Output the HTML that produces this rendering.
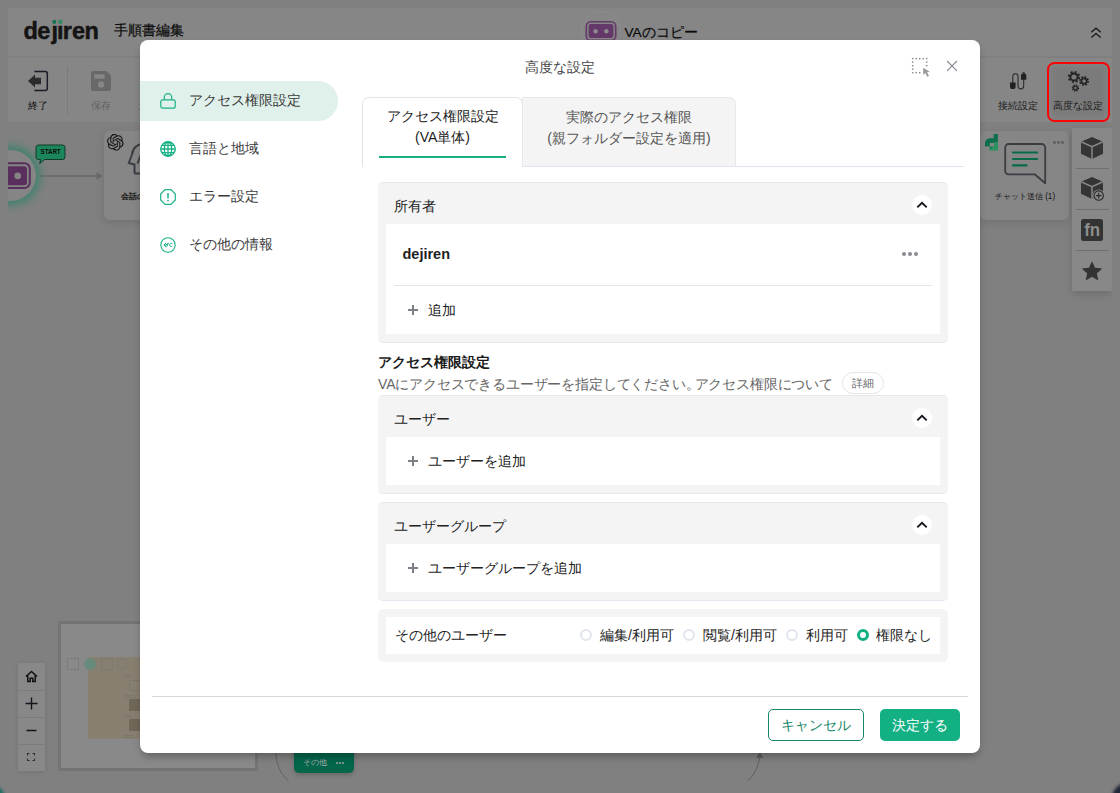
<!DOCTYPE html>
<html lang="ja"><head><meta charset="utf-8">
<style>
*{box-sizing:border-box;margin:0;padding:0}
html,body{width:1120px;height:793px;overflow:hidden;background:#808080;font-family:"Liberation Sans",sans-serif;color:#333}
.abs{position:absolute}
#bg{position:absolute;left:0;top:0;width:1120px;height:793px;overflow:hidden}
#hdr{left:8px;top:8px;width:1104px;height:48px;background:#868686}
#tb{left:8px;top:57px;width:1104px;height:65px;background:linear-gradient(#808080 0,#808080 1px,#868686 1px)}
.lbl{position:absolute;font-size:9.700px;margin-top:-.5px;color:#1a1a1a;white-space:nowrap;transform:translateX(-50%)}
.card{position:absolute;background:#868686;border-radius:6px;box-shadow:0 3px 8px rgba(0,0,0,.12)}
#modal{left:140px;top:40px;width:840px;height:713px;background:#fff;border-radius:8px;box-shadow:0 5px 9px -2px rgba(0,0,0,.3)}
.nav{position:absolute;left:0;width:198px;height:40px;font-size:13.7px;color:#3a3a3a;line-height:39px;padding-left:49px;white-space:nowrap}
.nav svg{position:absolute;left:20px;top:12px}
.nav.on{background:#e0f1eb;border-radius:0 20px 20px 0}
.sec{position:absolute;left:238px;width:570px;background:#f4f4f4;border-radius:5px;border-top:1px solid #e4e9f0;border-bottom:1px solid #e4e9f0}
.sec .h{position:absolute;left:16px;top:0;height:42px;line-height:46px;font-size:14px;color:#222}
.sec .w{position:absolute;left:8px;right:8px;background:#fff}
.chev{position:absolute;right:16px;top:12px;width:20px;height:20px;border-radius:50%;background:#fff}
.add{position:absolute;left:42px;font-size:14px;color:#222;white-space:nowrap}
.plus{position:absolute;left:22px;width:10px;height:10px}
.plus:before{content:"";position:absolute;left:0;top:4.200px;width:10px;height:1.600px;background:#7d8086}
.plus:after{content:"";position:absolute;left:4.200px;top:0;width:1.600px;height:10px;background:#7d8086}
.rd{position:absolute;top:12px;width:12px;height:12px;border-radius:50%;border:2px solid #e1e5ef;background:#fff}
.rl{position:absolute;top:0;line-height:36px;font-size:14px;color:#222;white-space:nowrap}
</style></head><body>
<div id="bg">
  <div id="hdr" class="abs">
    <svg class="abs" style="left:14px;top:9px" width="80" height="30" viewBox="0 0 80 30"><text x="1.400 15.200 29.500 34.900 40.700 49.900 62.400" y="21.500" font-family="Liberation Sans" font-weight="bold" font-size="23.500" fill="#141414" stroke="#141414" stroke-width=".500">dejiren</text><rect x="27.500" y="1.500" width="13.500" height="6.200" fill="#868686"/><circle cx="32.300" cy="4.900" r="2.050" fill="#15734e"/><rect x="36.400" y="2.900" width="3.800" height="3.900" fill="#2f8a63"/></svg>
    <div class="abs" style="left:105.800px;top:13px;font-size:13.600px;color:#0a0a0a;-webkit-text-stroke:.2px #0a0a0a;white-space:nowrap;line-height:20px">手順書編集</div>
    <div class="abs" style="left:573px;top:3px;width:40px;height:40px;border-radius:50%;border:1px solid #8d8d93;background:#868686"></div>
    <svg class="abs" style="left:577px;top:12px" width="32" height="22" viewBox="0 0 32 22"><rect x="1.300" y="1.800" width="29.400" height="18.600" rx="4.500" fill="none" stroke="#643868" stroke-width="1.600"/><rect x="3.600" y="4.100" width="24.800" height="14" rx="2.400" fill="#643868"/><circle cx="10.600" cy="11.200" r="2.200" fill="#8f8a90"/><circle cx="21.400" cy="11.200" r="2.200" fill="#8f8a90"/></svg>
    <div class="abs" style="left:616.500px;top:15px;font-size:13.600px;color:#0a0a0a;-webkit-text-stroke:.2px #0a0a0a;white-space:nowrap;line-height:20px">VAのコピー</div>
    <svg class="abs" style="left:1082px;top:19px" width="12" height="12" viewBox="0 0 12 12" fill="none" stroke="#16181f" stroke-width="1.3"><path d="M1.3 5.2 6 1.2 10.7 5.2M1.3 10.6 6 6.6 10.7 10.6"/></svg>
  </div>
  <div id="tb" class="abs">
    <svg class="abs" style="left:19px;top:13px" width="22" height="22" viewBox="0 0 22 22"><path d="M7.400 1.500H18.300a2 2 0 0 1 2 2V18.500a2 2 0 0 1-2 2H7.400" fill="none" stroke="#1b1b27" stroke-width="1.5"/><path d="M1 11 8 4.4V7.7H14V14.3H8V17.6Z" fill="#2b2b2b"/></svg>
    <div class="lbl" style="left:30px;top:42px;line-height:13px;color:#0c0c0c">終了</div>
    <div class="abs" style="left:59px;top:9px;width:1px;height:48px;background:#7b7b7b"></div>
    <svg class="abs" style="left:83px;top:14px" width="20" height="20" viewBox="0 0 20 20"><path d="M2 0H15.5L20 4.5V18a2 2 0 0 1-2 2H2a2 2 0 0 1-2-2V2a2 2 0 0 1 2-2Z" fill="#686868"/><rect x="3.300" y="3.200" width="10.2" height="4.6" fill="#868686"/><circle cx="10" cy="13.4" r="3.2" fill="#868686"/></svg>
    <div class="lbl" style="left:93px;top:42px;line-height:13px;color:#626262">保存</div>
    <div class="lbl" style="left:135px;top:42px;line-height:13px;color:#626262">元</div>
    <svg class="abs" style="left:999px;top:12px" width="22" height="22" viewBox="0 0 22 22" fill="none"><path d="M5.800 14V7.300a2.600 2.600 0 0 1 5.200 0V17a2.850 2.850 0 0 0 5.700 0V10.500" stroke="#2b2b2b" stroke-width="1.100"/><path d="M3 13.500H8.600V18.200L7.600 20H4L3 18.200Z M14 10.800H19.300V6.200L18.300 4.400H15L14 6.200Z" fill="#222"/><path d="M16.650 4.600V3.300" stroke="#222" stroke-width="2"/></svg>
    <div class="lbl" style="left:1010px;top:42px;line-height:13px">接続設定</div>
    <div class="abs" style="left:1039.400px;top:5.300px;width:62.200px;height:59.600px;border:2.500px solid #fa0505;border-radius:7.500px;background:#7b7b7b;box-shadow:inset 0 0 6px 2px #858585"></div>
    <svg class="abs" style="left:1058.600px;top:12.600px" width="24" height="24" viewBox="0 0 24 24"><g fill="none" stroke="#242424"><circle cx="7" cy="7" r="3.6" stroke-width="2"/><circle cx="7" cy="7" r="5.2" stroke-width="1.9" stroke-dasharray="2 2.08"/><circle cx="17" cy="11" r="2.7" stroke-width="1.7"/><circle cx="17" cy="11" r="4.1" stroke-width="1.7" stroke-dasharray="1.7 1.52"/><circle cx="8.4" cy="18" r="1.9" stroke-width="1.4"/><circle cx="8.4" cy="18" r="3" stroke-width="1.4" stroke-dasharray="1.3 1.06"/></g></svg>
    <div class="lbl" style="left:1070px;top:42px;line-height:13px">高度な設定</div>
  </div>
  <div id="cv" class="abs" style="left:8px;top:122px;width:1104px;height:671px;overflow:hidden">
    <!-- start node -->
    <div class="abs" style="left:-23.200px;top:28px;width:51px;height:51px;border-radius:50%;background:#858585;box-shadow:0 0 9px 4.500px #42826f;filter:blur(.4px)"></div>
    <svg class="abs" style="left:-20px;top:39px" width="44" height="30" viewBox="0 0 44 30"><rect x="2.800" y="2.200" width="39" height="24.800" rx="5.500" fill="none" stroke="#5a2f5e" stroke-width="2"/><rect x="5.600" y="5.300" width="33.400" height="18.900" rx="3" fill="#5a2f5e"/><circle cx="14.900" cy="14.900" r="3.300" fill="#858585"/><circle cx="29.700" cy="14.900" r="3.300" fill="#858585"/></svg>
    <svg class="abs" style="left:27.400px;top:21.900px" width="32" height="22" viewBox="0 0 32 22"><path d="M3.5 1H27.5a2.5 2.5 0 0 1 2.5 2.5V13a2.500 2.500 0 0 1-2.5 2.500H9.500L4.700 19.600 5.600 15.500H3.500a2.500 2.500 0 0 1-2.500-2.500V3.500A2.500 2.500 0 0 1 3.500 1Z" fill="#1b865b" stroke="#0e3a29" stroke-width="1"/><text x="15.600" y="10.400" font-family="Liberation Sans" font-weight="bold" font-size="7" fill="#0a0a0a" text-anchor="middle" textLength="20" lengthAdjust="spacingAndGlyphs">START</text></svg>
    <svg class="abs" style="left:30px;top:48px" width="66" height="12" viewBox="0 0 66 12"><path d="M2 6H60" stroke="#696969" stroke-width="1.500"/><path d="M58.500 2 64.500 6 58.500 10Z" fill="#696969"/></svg>
    <!-- left node card -->
    <div class="card" style="left:96px;top:9px;width:90px;height:89px"></div>
    <svg class="abs" style="left:99px;top:12.400px" width="16.600" height="16.600" viewBox="0 0 24 24"><path fill="#131313" d="M22.2819 9.8211a5.9847 5.9847 0 0 0-.5157-4.9108 6.0462 6.0462 0 0 0-6.5098-2.9A6.0651 6.0651 0 0 0 4.9807 4.1818a5.9847 5.9847 0 0 0-3.9977 2.9 6.0462 6.0462 0 0 0 .7427 7.0966 5.98 5.98 0 0 0 .511 4.9107 6.051 6.051 0 0 0 6.5146 2.9001A5.9847 5.9847 0 0 0 13.2599 24a6.0557 6.0557 0 0 0 5.7718-4.2058 5.9894 5.9894 0 0 0 3.9977-2.9001 6.0557 6.0557 0 0 0-.7475-7.0729zm-9.022 12.6081a4.4755 4.4755 0 0 1-2.8764-1.0408l.1419-.0804 4.7783-2.7582a.7948.7948 0 0 0 .3927-.6813v-6.7369l2.02 1.1686a.071.071 0 0 1 .038.052v5.5826a4.504 4.504 0 0 1-4.4945 4.4944zm-9.6607-4.1254a4.4708 4.4708 0 0 1-.5346-3.0137l.142.0852 4.783 2.7582a.7712.7712 0 0 0 .7806 0l5.8428-3.3685v2.3324a.0804.0804 0 0 1-.0332.0615L9.74 19.9502a4.4992 4.4992 0 0 1-6.1408-1.6464zM2.3408 7.8956a4.485 4.485 0 0 1 2.3655-1.9728V11.6a.7664.7664 0 0 0 .3879.6765l5.8144 3.3543-2.0201 1.1685a.0757.0757 0 0 1-.071 0l-4.8303-2.7865A4.504 4.504 0 0 1 2.3408 7.872zm16.5963 3.8558L13.1038 8.364 15.1192 7.2a.0757.0757 0 0 1 .071 0l4.8303 2.7913a4.4944 4.4944 0 0 1-.6765 8.1042v-5.6772a.79.79 0 0 0-.407-.667zm2.0107-3.0231l-.142-.0852-4.7735-2.7818a.7759.7759 0 0 0-.7854 0L9.409 9.2297V6.8974a.0662.0662 0 0 1 .0284-.0615l4.8303-2.7866a4.4992 4.4992 0 0 1 6.6802 4.66zM8.3065 12.863l-2.02-1.1638a.0804.0804 0 0 1-.038-.0567V6.0742a4.4992 4.4992 0 0 1 7.3757-3.4537l-.142.0805L8.704 5.459a.7948.7948 0 0 0-.3927.6813zm1.0976-2.3654l2.602-1.4998 2.6069 1.4998v2.9994l-2.5974 1.4997-2.6067-1.4997Z"/></svg>
    <svg class="abs" style="left:118px;top:20px" width="40" height="34" viewBox="0 0 40 34" fill="none" stroke="#3a3d42" stroke-width="2"><path d="M8.500 31.500V22.500L2.800 21 6 12.500C7 5.500 12 1.800 19 1.800"/><path d="M8.500 31.500H22"/><path d="M11.500 21.500 15 12.500"/></svg>
    <div class="abs" style="left:113px;top:68px;font-size:8.400px;font-weight:bold;color:#1a1a1a;white-space:nowrap;line-height:12px">会話の生成</div>
    <!-- right chat card -->
    <div class="card" style="left:972px;top:9px;width:89px;height:89px"></div>
    <svg class="abs" style="left:977px;top:12px" width="14" height="18" viewBox="0 0 14 18"><path d="M12.900 0H8.600V4.200H5A5 5 0 0 0 0 9.200V12.600H4.800V9H9V8.600H12.900Z" fill="#0f6e4b"/><rect x="9" y="8.600" width="3.900" height="8" fill="#2a9461"/><path d="M4.600 12.600H8.700V16.600H4.600Z" fill="#2a9461"/><path d="M4.600 12.600H8.700L4.600 16Z" fill="#1b7f55"/></svg>
    <svg class="abs" style="left:994px;top:19px" width="46" height="46" viewBox="0 0 46 46" fill="none"><path d="M6.700 3H39.700a3.500 3.500 0 0 1 3.500 3.500V42.300L32.700 33.300H6.700a3.500 3.500 0 0 1-3.500-3.500V6.500A3.500 3.500 0 0 1 6.700 3Z" stroke="#3b3d43" stroke-width="1.800" stroke-linejoin="round"/><path d="M11 11.500H35.200M11 18H35.200M11 24.400H24.600" stroke="#086a4a" stroke-width="2.100" stroke-linecap="round"/></svg>
    <div class="abs" style="left:1042px;top:18px;width:16px;height:6px"><i class="abs" style="left:3.200px;top:1px;width:2.800px;height:2.800px;border-radius:50%;background:#5f5f5f"></i><i class="abs" style="left:7.100px;top:1px;width:2.800px;height:2.800px;border-radius:50%;background:#5f5f5f"></i><i class="abs" style="left:11px;top:1px;width:2.800px;height:2.800px;border-radius:50%;background:#5f5f5f"></i></div>
    <div class="abs" style="left:972px;top:68px;width:90px;text-align:center;font-size:8.200px;color:#151515;white-space:nowrap;line-height:12px;top:69px">チャット送信 (1)</div>
    <!-- right side panel -->
    <div class="abs" style="left:1064px;top:6px;width:40px;height:163px;background:#888;box-shadow:0 3px 8px rgba(0,0,0,.14)">
      <i class="abs" style="left:4px;top:40px;width:33px;height:1.300px;background:#6f6f6f"></i>
      <i class="abs" style="left:4px;top:81px;width:33px;height:1.300px;background:#6f6f6f"></i>
      <i class="abs" style="left:4px;top:122px;width:33px;height:1.300px;background:#6f6f6f"></i>
      <svg class="abs" style="left:8px;top:8px" width="24" height="24" viewBox="0 0 24 24"><path d="M12 1 23 5.800V17.800L12 23 1 17.800V5.800Z" fill="#353535"/><path d="M1 5.800 12 10.800 23 5.800M12 10.800V23" stroke="#878787" stroke-width="1.500" fill="none"/></svg>
      <svg class="abs" style="left:8px;top:48px" width="28" height="28" viewBox="0 0 28 28"><path d="M12 1 23 5.800V17.800L12 23 1 17.800V5.800Z" fill="#353535"/><path d="M1 5.800 12 10.800 23 5.800M12 10.800V23" stroke="#878787" stroke-width="1.500" fill="none"/><circle cx="18.700" cy="19.600" r="6" fill="#888"/><circle cx="18.700" cy="19.600" r="4.700" fill="none" stroke="#2a2a2a" stroke-width="1.100"/><path d="M15.900 19.600H21.500M18.700 16.800V22.400" stroke="#2a2a2a" stroke-width="1.100"/></svg>
      <svg class="abs" style="left:9px;top:91px" width="22" height="22" viewBox="0 0 22 22"><rect width="22" height="22" rx="2.500" fill="#333"/><text x="11.200" y="17.300" font-family="Liberation Sans" font-weight="bold" font-size="18.500" fill="#8d8d8d" text-anchor="middle" textLength="16" lengthAdjust="spacingAndGlyphs">fn</text></svg>
      <svg class="abs" style="left:9px;top:132px" width="22" height="22" viewBox="0 0 22 22"><path d="M11 1.200 14 7.800 21.200 8.600 15.800 13.400 17.400 20.500 11 16.800 4.600 20.500 6.200 13.400 0.800 8.600 8 7.800Z" fill="#333"/></svg>
    </div>
    <!-- zoom controls -->
    <div class="abs" style="left:10px;top:541px;width:27px;height:108px;background:#888;box-shadow:0 1px 4px rgba(0,0,0,.12)">
      <i class="abs" style="left:0;top:27px;width:27px;height:1px;background:#7c7c7c"></i>
      <i class="abs" style="left:0;top:54px;width:27px;height:1px;background:#7c7c7c"></i>
      <i class="abs" style="left:0;top:81px;width:27px;height:1px;background:#7c7c7c"></i>
      <svg class="abs" style="left:7px;top:7px" width="13" height="13" viewBox="0 0 13 13" fill="none" stroke="#111" stroke-width="1.500"><path d="M1 6.500 6.500 1.500 12 6.500M2.800 5.500V11.500H5.200V8.300H7.800V11.500H10.200V5.500"/></svg>
      <svg class="abs" style="left:7px;top:34px" width="13" height="13" viewBox="0 0 13 13" stroke="#14141c" stroke-width="1.400"><path d="M0.500 6.500H12.500M6.500 0.500V12.500"/></svg>
      <svg class="abs" style="left:7px;top:61px" width="13" height="13" viewBox="0 0 13 13" stroke="#14141c" stroke-width="1.500"><path d="M1.500 6.500H11.500"/></svg>
      <svg class="abs" style="left:9.100px;top:90.200px" width="8" height="8" viewBox="0 0 9 9" fill="none" stroke="#2c2c34" stroke-width="1.200"><path d="M0.500 2.800V0.500H2.800M6.200 0.500H8.500V2.800M8.500 6.200V8.500H6.200M2.800 8.500H0.500V6.200"/></svg>
    </div>
    <!-- minimap -->
    <div class="abs" style="left:50px;top:499px;width:200px;height:150px;background:#898989;border:3px solid #747474;overflow:hidden">
      <div class="abs" style="left:27px;top:33px;width:120px;height:82px;background:#877f70"></div>
      <i class="abs" style="left:6px;top:34px;width:12px;height:12px;border:1px solid #7b7d7b"></i>
      <i class="abs" style="left:23px;top:34px;width:12px;height:12px;border-radius:50%;background:#688a7a"></i>
      <i class="abs" style="left:40px;top:34px;width:12px;height:12px;border:1px solid #7b7b72"></i>
      <i class="abs" style="left:57px;top:35px;width:9px;height:10px;border:1px solid #7b7b72"></i>
      <i class="abs" style="left:63px;top:51px;width:8px;height:3px;border:1px solid #7c776b;border-radius:2px"></i>
      <i class="abs" style="left:68px;top:56px;width:14px;height:11px;border:1px solid #7c776b;border-radius:1px"></i>
      <i class="abs" style="left:63px;top:71px;width:12px;height:3px;border:1px solid #7c776b;border-radius:2px"></i>
      <i class="abs" style="left:68px;top:75px;width:14px;height:12px;background:#6f6859"></i>
      <i class="abs" style="left:63px;top:91px;width:8px;height:3px;border:1px solid #7c776b;border-radius:2px"></i>
      <i class="abs" style="left:68px;top:95px;width:14px;height:12px;background:#6f6859"></i>
      <i class="abs" style="left:63px;top:111px;width:9px;height:3px;border:1px solid #7c776b"></i>
    </div>
    <!-- bottom -->
    <svg class="abs" style="left:260px;top:625px" width="30" height="40" viewBox="0 0 30 40" fill="none" stroke="#626262" stroke-width="1"><path d="M8 0C7 12 10 25 20.500 34"/></svg>
    <div class="abs" style="left:286px;top:622px;width:60px;height:29px;border-radius:5px;background:#03654a;box-shadow:0 2px 5px rgba(0,0,0,.2)"><span class="abs" style="left:9px;top:12px;font-size:8.400px;color:#a3aeaa;line-height:12px;white-space:nowrap">その他</span><i class="abs" style="left:42px;top:17.500px;width:2px;height:2px;border-radius:50%;background:#9aa8a3"></i><i class="abs" style="left:45px;top:17.500px;width:2px;height:2px;border-radius:50%;background:#9aa8a3"></i><i class="abs" style="left:48px;top:17.500px;width:2px;height:2px;border-radius:50%;background:#9aa8a3"></i></div>
    <svg class="abs" style="left:730px;top:625px" width="30" height="40" viewBox="0 0 30 40" fill="none" stroke="#5e5e5e" stroke-width="1"><path d="M10.300 33.500C17 27 21.300 18 21.800 7"/><path d="M19 10.500 21.800 5 24.600 10.500Z" fill="#5e5e5e"/></svg>
    <!-- corners -->
  </div>
  <div class="abs" style="left:-34px;top:782px;width:40px;height:40px;border-radius:50%;background:#1f6f60;filter:blur(1.5px)"></div>
  <div class="abs" style="left:1112px;top:783px;width:30px;height:30px;border-radius:50%;background:#232838;filter:blur(1.5px)"></div>
</div>
<div id="modal" class="abs">
  <div class="abs" style="left:0;top:16px;width:840px;text-align:center;font-size:14px;color:#444;line-height:22px">高度な設定</div>
  <svg class="abs" style="left:771px;top:17px" width="21" height="21" viewBox="0 0 21 21"><g fill="#8f8f8f"><rect x="0.95" y="0.85" width="1.5" height="1.5"/><rect x="0.95" y="4.35" width="1.5" height="1.5"/><rect x="0.95" y="7.95" width="1.5" height="1.5"/><rect x="0.95" y="11.45" width="1.5" height="1.5"/><rect x="0.95" y="14.95" width="1.5" height="1.5"/><rect x="4.45" y="0.85" width="1.5" height="1.5"/><rect x="4.45" y="14.95" width="1.5" height="1.5"/><rect x="7.95" y="0.85" width="1.5" height="1.5"/><rect x="7.95" y="14.95" width="1.5" height="1.5"/><rect x="11.45" y="0.85" width="1.5" height="1.5"/><rect x="14.95" y="0.85" width="1.5" height="1.5"/><rect x="14.95" y="4.35" width="1.5" height="1.5"/><rect x="14.95" y="7.95" width="1.5" height="1.5"/></g><path d="M12.200 10.700V18L14.300 16.100 16.300 19.800 18 19 16.100 15.300 18.800 14.800Z" fill="#9a9a9a"/></svg>
  <svg class="abs" style="left:806px;top:20px" width="12" height="12" viewBox="0 0 12 12" stroke="#8a8a95" stroke-width="1.150"><path d="M1.100 1 10.900 10.800M10.900 1 1.100 10.800"/></svg>
  <!-- nav -->
  <div class="nav on" style="top:41px"><svg width="16" height="16" viewBox="0 0 16 16" fill="none" stroke="#1ab188" stroke-width="1.200"><rect x="0.800" y="6.800" width="14.400" height="8.400" rx="2"/><path d="M4.300 6.800V4.300a3.700 3.700 0 0 1 7.400 0V6.800"/></svg>アクセス権限設定</div>
  <div class="nav" style="top:89px"><svg width="16" height="16" viewBox="0 0 16 16" fill="none" stroke="#1ab188" stroke-width="1.3"><circle cx="8" cy="8" r="7.200" stroke-width="1.400"/><ellipse cx="8" cy="8" rx="3.700" ry="7.200"/><path d="M8 0.800V15.200M0.800 8H15.200M2 4.300H14M2 11.700H14"/><path d="M4.500 1.800H11.500M4.500 14.200H11.500" stroke-width="1"/></svg>言語と地域</div>
  <div class="nav" style="top:137px"><svg width="16" height="16" viewBox="0 0 16 16" fill="none" stroke="#1ab188" stroke-width="1.200"><path d="M5 0.700H11L15.300 5V11L11 15.300H5L0.700 11V5Z"/><path d="M8 4V9.300M8 10.800V12.300" stroke-width="1.500"/></svg>エラー設定</div>
  <div class="nav" style="top:185px"><svg width="16" height="16" viewBox="0 0 16 16" fill="none" stroke="#1ab188" stroke-width="1.100"><circle cx="8" cy="8" r="7.200"/><path d="M6.300 6 3.900 8 6.300 10M4.800 8.500 8.800 6.200M8.300 6.200 6.600 9.800M12.300 6.700C11 6 9.600 6.800 9.600 8S11 10 12.300 9.300" stroke-width="1"/></svg>その他の情報</div>
  <!-- tabs -->
  <div class="abs" style="left:222px;top:126px;width:602px;height:1px;background:#dfe5ee"></div>
  <div class="abs" style="left:222px;top:57px;width:161px;height:70px;background:#fff;border:1px solid #e1e4ea;border-bottom:none;border-radius:7px 7px 0 0;text-align:center;font-size:14px;color:#222;line-height:21px;padding-top:8px">アクセス権限設定<br>(VA単体)</div>
  <div class="abs" style="left:239px;top:116px;width:127px;height:2px;background:#18b083"></div>
  <div class="abs" style="left:382px;top:57px;width:214px;height:70px;background:#f4f4f4;border:1px solid #e6e8ec;border-bottom:1px solid #dfe5ee;border-radius:0 7px 0 0;text-align:center;font-size:14px;color:#555;line-height:21px;padding-top:9px">実際のアクセス権限<br>(親フォルダー設定を適用)</div>
  <!-- owner -->
  <div class="sec" style="top:142px;height:161px"><div class="h">所有者</div><div class="chev"><svg width="20" height="20" viewBox="0 0 20 20" fill="none" stroke="#10131c" stroke-width="1.800"><path d="M5.300 12.400 10 7.800 14.700 12.400"/></svg></div>
    <div class="w" style="top:41px;height:110px">
      <div class="abs" style="left:16.500px;top:20px;font-size:14.500px;font-weight:bold;color:#1f1f1f;line-height:20px">dejiren</div>
      <div class="abs" style="left:516px;top:28px;width:17px;height:4px"><i class="abs" style="left:0.300px;top:0;width:4px;height:4px;border-radius:50%;background:#8b8b93"></i><i class="abs" style="left:6px;top:0;width:4px;height:4px;border-radius:50%;background:#8b8b93"></i><i class="abs" style="left:11.600px;top:0;width:4px;height:4px;border-radius:50%;background:#8b8b93"></i></div>
      <div class="abs" style="left:8px;top:61px;width:538px;height:1px;background:#e1e6ee"></div>
      <div class="plus" style="top:81px"></div><div class="add" style="top:75px;line-height:22px">追加</div>
    </div>
  </div>
  <div class="abs" style="left:238px;top:311px;font-size:14px;font-weight:bold;color:#1a1a1a;line-height:22px;white-space:nowrap">アクセス権限設定</div>
  <div class="abs" style="left:238px;top:333px;font-size:14px;color:#666;line-height:22px;white-space:nowrap;letter-spacing:-.17px" id="sub">VAにアクセスできるユーザーを指定してください<span style="margin-right:-5px">。</span>アクセス権限について</div>
  <div class="abs" style="left:702px;top:332px;width:42px;height:22px;border:1px solid #e6e6e6;border-radius:11px;font-size:11px;color:#666;text-align:center;line-height:21px">詳細</div>
  <!-- users -->
  <div class="sec" style="top:355px;height:99px"><div class="h">ユーザー</div><div class="chev"><svg width="20" height="20" viewBox="0 0 20 20" fill="none" stroke="#10131c" stroke-width="1.800"><path d="M5.300 12.400 10 7.800 14.700 12.400"/></svg></div>
    <div class="w" style="top:41px;height:48px"><div class="plus" style="top:19px"></div><div class="add" style="top:13px;line-height:22px">ユーザーを追加</div></div>
  </div>
  <div class="sec" style="top:462px;height:99px"><div class="h">ユーザーグループ</div><div class="chev"><svg width="20" height="20" viewBox="0 0 20 20" fill="none" stroke="#10131c" stroke-width="1.800"><path d="M5.300 12.400 10 7.800 14.700 12.400"/></svg></div>
    <div class="w" style="top:41px;height:48px"><div class="plus" style="top:19px"></div><div class="add" style="top:13px;line-height:22px">ユーザーグループを追加</div></div>
  </div>
  <div class="sec" style="top:569px;height:53px;border:none">
    <div class="w" style="top:8px;height:37px">
      <div class="rl" style="left:9px">その他のユーザー</div>
      <div class="rd" style="left:194px"></div><div class="rl" style="left:214px">編集/利用可</div>
      <div class="rd" style="left:296.700px"></div><div class="rl" style="left:317px">閲覧/利用可</div>
      <div class="rd" style="left:400px"></div><div class="rl" style="left:420px">利用可</div>
      <div class="rd" style="left:470.500px;border:3.800px solid #12b083"></div><div class="rl" style="left:490px">権限なし</div>
    </div>
  </div>
  <div class="abs" style="left:12px;top:656px;width:816px;height:1px;background:#d9d9d9"></div>
  <div class="abs" style="left:628px;top:669px;width:96px;height:32px;border:1px solid #16866a;border-radius:5px;color:#16866a;font-size:14px;text-align:center;line-height:30px">キャンセル</div>
  <div class="abs" style="left:740px;top:669px;width:80px;height:32px;border-radius:5px;background:#12b083;color:#fff;font-size:14px;text-align:center;line-height:32px">決定する</div>
</div>
</body></html>
